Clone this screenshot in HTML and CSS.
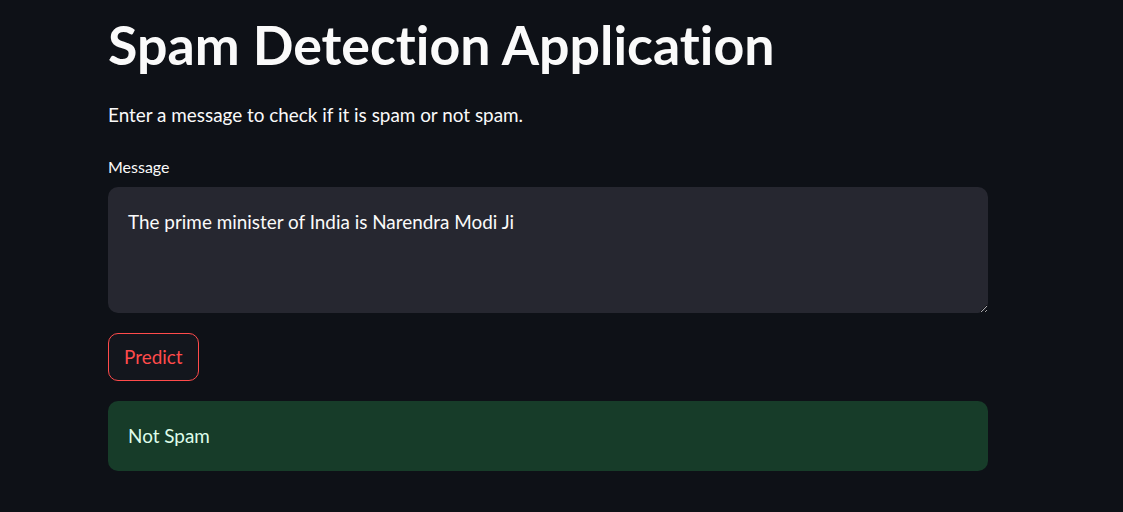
FILE: index.html
```html
<!DOCTYPE html>
<html lang="en">
<head>
<meta charset="utf-8">
<title>Spam Detection Application</title>
<link rel="stylesheet" href="styles.css">
</head>
<body>
<main class="app">
  <div class="block">
    <h1 class="title">Spam Detection Application</h1>
    <p class="intro">Enter a message to check if it is spam or not spam.</p>
    <div class="field">
      <label class="label" for="msg">Message</label>
      <textarea id="msg" class="textarea">The prime minister of India is Narendra Modi Ji</textarea>
    </div>
    <div class="actions">
      <button class="btn" type="button">Predict</button>
    </div>
    <div class="alert">Not Spam</div>
  </div>
</main>
</body>
</html>
```
FILE: styles.css
```css
html, body {
  margin: 0;
  padding: 0;
  background: #0e1117;
  color: #fafafa;
  font-family: "Lato", "Source Sans Pro", sans-serif;
  font-variant-ligatures: none;
}
.app {
  display: flex;
  justify-content: flex-start;
  padding: 12px 0 40px 108px;
}
.block {
  width: 880px;
  display: flex;
  flex-direction: column;
}
.title {
  margin: 0;
  font-size: 53.7px;
  font-weight: 700;
  line-height: 1.2;
  color: #fafafa;
  font-variant-ligatures: none;
}
.intro {
  margin: 24px 0 0;
  font-size: 18.9px;
  line-height: 1.6;
}
.field {
  margin-top: 24px;
  display: flex;
  flex-direction: column;
  gap: 8px;
}
.label {
  font-size: 16px;
  line-height: 1.5;
  color: #fafafa;
}
.textarea {
  box-sizing: border-box;
  display: block;
  width: 880px;
  height: 126px;
  margin: 0;
  padding: 20px 20px;
  border: none;
  border-radius: 10px;
  background: #262730;
  color: #fafafa;
  font-family: inherit;
  font-size: 18.9px;
  line-height: 1.6;
  font-variant-ligatures: none;
  resize: vertical;
  outline: none;
  color-scheme: dark;
}
.actions {
  margin-top: 20px;
  display: flex;
}
.btn {
  box-sizing: border-box;
  height: 48px;
  padding: 0 15px;
  border: 1px solid #ff4b4b;
  border-radius: 10px;
  background: #13161d;
  color: #ff4b4b;
  font-family: inherit;
  font-size: 18.9px;
  line-height: 1.6;
  display: flex;
  align-items: center;
}
.alert {
  margin-top: 20px;
  box-sizing: border-box;
  height: 70px;
  padding: 0 20px;
  border-radius: 10px;
  background: #173c29;
  color: #dffde9;
  font-size: 18.9px;
  line-height: 1.6;
  display: flex;
  align-items: center;
}
```
